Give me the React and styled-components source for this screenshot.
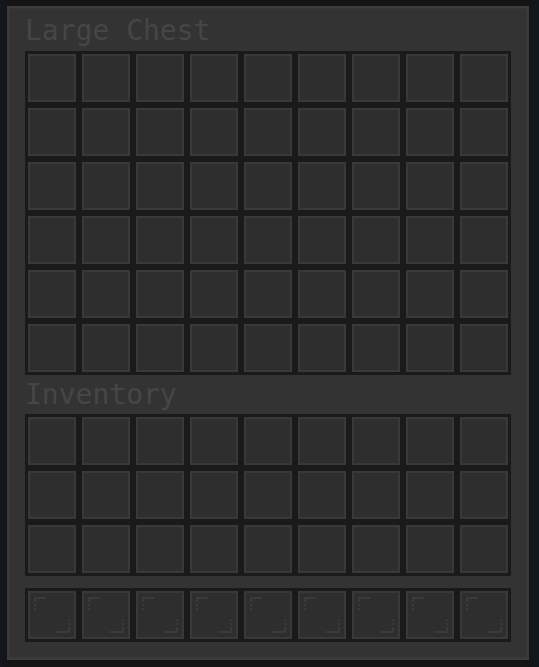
import { createGlobalStyle, styled } from 'styled-components';

const GlobalStyle = createGlobalStyle`
  html, body {
    margin: 0;
    padding: 0;
  }

  body {
    min-height: 667px;
    background:
      linear-gradient(90deg, #131722 0, #141414 8px, #141414 529px, #121820 539px),
      #141414;
    font-family: 'DejaVu Sans Mono', 'Liberation Mono', monospace;
  }
`;

const Panel = styled.div`
  box-sizing: border-box;
  width: 522px;
  margin: 6px 0 0 7px;
  padding: 2px 16px 16px;
  background: #333333;
  border: 2px solid #3c3c3c;
  box-shadow: inset 0 0 0 1px #373737;
`;

const Label = styled.div`
  font-size: 28px;
  line-height: ${(props) => props.$lineHeight || 39}px;
  color: #464646;
  white-space: nowrap;
`;

const Grid = styled.div`
  display: grid;
  grid-template-columns: repeat(9, 48px);
  gap: 6px;
  padding: 3px;
  background: #1a1a1a;
  margin-top: ${(props) => props.$gapTop || 0}px;
`;

const Slot = styled.div`
  box-sizing: border-box;
  width: 48px;
  height: 48px;
  background: #2e2e2e;
  border: 2px solid #393939;
  display: flex;
  align-items: center;
  justify-content: center;
`;

function HotbarMark() {
  return (
    <svg width="44" height="44" viewBox="0 0 44 44">
      <g fill="#3a3a3a">
        <rect x="4" y="4" width="12" height="2" />
        <rect x="4" y="6" width="2" height="3" />
        <rect x="4" y="11" width="2" height="2" />
        <rect x="4" y="15" width="2" height="2" />
        <rect x="38" y="26" width="2" height="2" />
        <rect x="38" y="30" width="2" height="2" />
        <rect x="38" y="34" width="2" height="4" />
        <rect x="26" y="38" width="14" height="2" />
      </g>
    </svg>
  );
}

function SlotGrid({ rows, gapTop, hotbar }) {
  const slots = Array.from({ length: rows * 9 });
  return (
    <Grid $gapTop={gapTop}>
      {slots.map((_, i) => (
        <Slot key={i}>{hotbar && <HotbarMark />}</Slot>
      ))}
    </Grid>
  );
}

export default function App() {
  return (
    <>
      <GlobalStyle />
      <Panel>
        <Label $lineHeight={41}>Large Chest</Label>
        <SlotGrid rows={6} />
        <Label>Inventory</Label>
        <SlotGrid rows={3} />
        <SlotGrid rows={1} gapTop={12} hotbar />
      </Panel>
    </>
  );
}
